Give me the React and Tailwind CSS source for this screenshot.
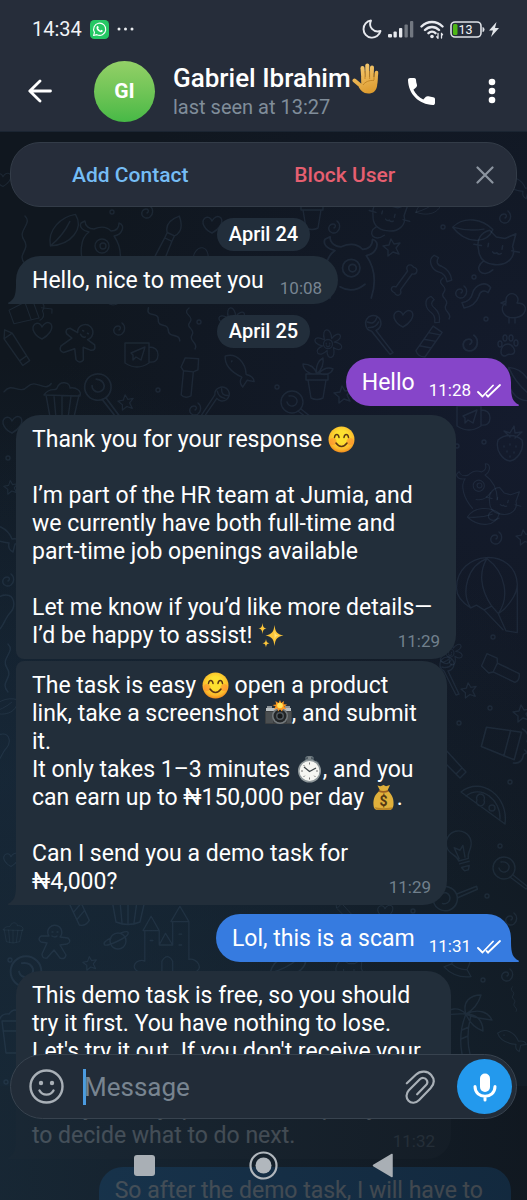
import React from "react";

const DOODLES = {
  spiral: "M0 1c2-1 2-4-1-4s-5 3-4 6 5 4 8 2 4-8 0-11",
  star: "M-1-8l3 5 6-1-4 5 3 6-6-2-5 4 0-6-5-4 6-1z",
  heart: "M0 8C-7 5-12-3-7-7c3-2 6 0 7 3 2-4 6-6 9-3 3 5-3 12-9 15z",
  flower:
    "M-5 0a5 5 0 1 0 10 0a5 5 0 1 0-10 0M-4-5c-4-14 8-14 8-1 8-11 16-1 3 4 13 1 9 13-1 6 4 13-8 15-7 3-9 10-17 0-5-5-13-2-10-13 1-7M-2-1v1M2-1v1M-2 2q2 2 4 0",
  bone: "M-4 10L4-8c-4-5 2-9 5-5 6 0 5 7 0 7L1 12c3 5-3 8-5 4-6-1-5-7 0-6z",
  pot: "M-11-4h22v6h-22zM-9 2l3 18q6 3 12 0L9 2M0-4c-2-8 2-14 6-16 1 6-1 11-6 16zM0-4c-9 1-14-5-14-10 7 0 12 4 14 10zM2-5c5-5 10-6 14-4-2 5-8 7-14 4z",
  ribbon: "M-8-14c-8 4-4 14 2 17 5 2 7 6 7 11l5-1c0-8-3-12-8-15-5-2-5-6-2-9z",
  squiggle: "M-4-22c-8 6 6 8 1 14s6 7 2 13 7 8 3 14",
  duck: "M-6-8a6 6 0 1 1 11 3c8 0 10 5 7 10-4 6-18 7-21-1-2-5 1-8 3-9zM-6-7l-5 2 5 2M-3 10v5M3 10v5",
  paw: "M-6 6c0-5 3-8 7-8s8 6 6 9-5 0-7 2-6 1-6-3zM-9-2a2 3 0 1 0 4 0a2 3 0 1 0-4 0M-4-8a2 3 0 1 0 4 0a2 3 0 1 0-4 0M2-8a2 3 0 1 0 4 0a2 3 0 1 0-4 0M7-3a2 3 0 1 0 4 0a2 3 0 1 0-4 0",
  candy: "M-7-12a7 7 0 1 1 8 7L12 18l-3 1L-3-5a7 7 0 0 1-4-7M-5-14q6 4 9-2M-5-9q6 2 10-3",
  stick: "M-6-14h11v30q-6 4-11 0zM-6-6l11-5M-6 2l11-5M-6 10l11-5",
  brush: "M0-22c8 8 9 14 4 20h-8c-5-6-4-12 4-20zM-4-2v6h8v-6M-4 4l-1 20q5 4 10 0L4 4",
  monster:
    "M-16 24c-6-16-5-32 4-38-6-1-10-5-8-9l4-2c0 5 4 8 9 8 7-3 13-2 17 2 5 0 8-3 8-8 7 2 3 12-5 13 7 10 8 22 4 34M-6 0a7 7 0 1 0 14 0a7 7 0 1 0-14 0M-1 0a3 3 0 1 0 6 0a3 3 0 1 0-6 0M-8 15q10 6 20-2",
  cat: "M-16 6c-4-9 0-16 7-19l7 5h8l9-6-1 12c5 8-1 18-13 19-9 1-15-3-17-11zM-8-1v3M5-1v3M-3 6q2 2 4 0 2 2 4 0M-21 2h7M14 2h7M-10 16c-8 8 2 16 10 6",
  strawberry:
    "M-12-6c6-6 18-6 24 0 3 11-6 20-12 21-7-1-15-10-12-21zM0-9l-6-6 6 2 4-7 1 7 7-1-7 6M-6 0v1M0-2v1M6 0v1M-3 5v1M4 6v1M0 10v1",
  balloon:
    "M-30 0C-30-40 32-44 34-4 34 8 22 22 14 27l-7-8-8 4-8-5-6 3c-8-5-15-12-15-21zM-15 21C-26 4-18-24 2-31M7 19C-6 0-6-18 2-31M14 27C26 10 22-16 2-31M14 27l8 18 12 2 0-50M-1 23l20 21",
  pizza: "M-20-12C0-28 28-8 24 20zM-15-8C0-20 20-4 19 15M-4-4a4 4 0 1 0 7 0a4 4 0 1 0-7 0M8 4a3 3 0 1 0 6 0a3 3 0 1 0-6 0M-20-12l44 32",
  bulb: "M-5 10c0-7-8-8-8-17a12 12 0 0 1 25 0c0 9-7 10-7 17zM-5 13h10M-4 17h8l-2 4h-4zM-4 8l-2-12 5 4 4-4-1 12",
  cake: "M-18-8c6-9 12-3 13-7 3-8 13-6 13 0 6-1 12 3 10 8zM-16-8l4 22q12 5 24 0l5-22M-8-7l2 22M0-7v23M9-7l-3 22",
  castle:
    "M-34 30c-12-4-3-16 6-12V-16h16v16h15v-26h18v42c10-2 17 12 6 14zM-30-16l9-16 9 16zM-12 0l7-13 8 13zM1-26l10-17 10 17zM-9 30V18q6-10 12 0v12M-22-5h3M10-12h3M10 0h3",
  ginger: "M-6-10a7 7 0 1 1 12 3l8 1q4 4-1 6l-7 1 6 10q-1 5-6 3l-6-8-7 8q-5 1-5-4l5-11-6-1q-4-3 0-6l8 0zM-2-12h1M3-12h1M-2-8q3 2 5 0",
  planet: "M-8 0a8 8 0 1 0 16 0a8 8 0 1 0-16 0M-7-3c-7 3-8 6-6 7 5 1 22-8 23-11 1-3-2-3-7-1",
  palm: "M-4 32C-7 16-5 4 0-8l5 1C1 8 1 20 4 32M0-8c-8-8-18-6-22 2 9-3 16-2 22-2zM0-8c-4-12 4-19 15-19-3 10-8 15-15 19zM0-8c12-6 22-2 26 6-9-1-18-2-26-6zM0-8c10 0 17 6 17 17C9 6 3 0 0-8zM-4 8l7-3M-5 17l7-3",
  fish: "M-18-6c10-8 22 0 26 10 5-1 9 1 10 4l-7 1-2 8c-4-2-5-5-4-9-10-1-20-4-23-14zM-10-4v1",
  shake: "M-13-14h26l-4 32h-18zM-16-14q2-8 10-7 6-8 12 0 9-1 10 7M-12-4h24M2-21l6-12 5 2",
  mug: "M-12-12h24v20q-12 8-24 0zM12-8q9 0 9 8t-9 7M-6-2l14-6-4 13-5-3-3 3v-5z",
  leaf: "M-20 6c4-16 22-22 36-18 2 16-16 26-36 18zM-20 6q16-4 28-14",
  pencil: "M-14-14l8 2 22 24-6 6-23-23zM-6-12l-6 6M12 8l-6 6",
  drop: "M-2-26c8 8-8 14-1 24s-8 14 1 24",
  pear: "M0-20c9 0 10 12 4 18s-8 20-17 19-13-14-4-22S-10-20 0-20z",
  ring: "M-2 0a2 2 0 1 0 4 0a2 2 0 1 0-4 0",
  lolly: "M-11-6a11 11 0 1 0 22 0a11 11 0 1 0-22 0M-5-6a5 5 0 1 0 10-2q-2-5-8-4M6 3l16 12 2-2L9 1",
  torch: "M-9-18l12-6 5 10-3 4 10 22q-4 6-9 4L-4-6l-4-2zM-4-6l9-4",
  hat: "M-16 8q16 8 32 0l-7-6c2-12-3-20-9-20S-11-10-9 2zM-9 2q9 4 18 0",
};

const PLACED = [
  ["leaf", 66, 232, 1, -25], ["ring", 112, 212], ["spiral", 147, 212], ["brush", 170, 236, 1, 25], ["heart", 212, 225],
  ["drop", 27, 242], ["monster", 101, 246, 1, 0], ["hat", 200, 262, 0.8, 10], ["pot", 312, 208], ["spiral", 334, 227],
  ["cat", 390, 214, 1, 15], ["leaf", 430, 208, 0.7], ["spiral", 505, 217], ["ring", 443, 227], ["star", 392, 247],
  ["monster", 350, 268, 1.25, 0], ["cat", 497, 246, 1.1, 10], ["leaf", 473, 232, 1, 30], ["bone", 402, 278, 1, 12],
  ["ribbon", 444, 268, 1, -8], ["squiggle", 447, 300], ["spiral", 461, 292], ["ribbon", 477, 299, 1.1, 80], ["duck", 512, 308],
  ["ribbon", 436, 310, 0.9, 10], ["heart", 403, 319], ["ring", 486, 319], ["ring", 474, 277], ["candy", 376, 336, 1.1, -12],
  ["stick", 430, 341, 1, 35], ["spiral", 470, 343, 1.3], ["paw", 507, 346], ["flower", 328, 344, 0.9], ["pot", 317, 378],
  ["lolly", 292, 408, 1], ["ring", 277, 387], ["star", 343, 394], ["mug", 469, 418], ["leaf", 518, 386, 1, 80],
  ["shake", 25, 312, 0.8, 70], ["pear", 105, 300, 0.8, 80], ["heart", 42, 331], ["spiral", 119, 329], ["ginger", 78, 343, 1.1, 30],
  ["pencil", 16, 346, 1, 10], ["squiggle", 166, 325, 1.1, -35], ["squiggle", 193, 330], ["ring", 199, 322], ["flower", 232, 322, 0.9],
  ["mug", 137, 355], ["fish", 240, 368, 1, 20], ["torch", 184, 378, 1, 30], ["star", 126, 402, 0.9], ["lolly", 96, 394, 1.2, 15],
  ["drop", 26, 390, 1, 80], ["cake", 62, 403, 1], ["candy", 212, 400, 1, 60], ["spiral", 195, 409], ["ring", 158, 390],
  ["heart", 12, 425], ["star", 11, 487, 0.8], ["fish", 4, 535], ["pear", 6, 615], ["ring", 8, 458], ["spiral", 8, 580],
  ["strawberry", 510, 446], ["ring", 484, 442], ["ring", 457, 446], ["monster", 478, 486, 0.8, -20], ["cat", 504, 500, 0.85, 15],
  ["leaf", 484, 518, 0.8, 20], ["spiral", 496, 538], ["star", 524, 537, 0.9], ["balloon", 485, 588, 0.95], ["ring", 493, 637],
  ["flower", 450, 653, 0.8], ["torch", 500, 674, 1, -40], ["star", 469, 690, 0.9], ["candy", 447, 676, 1], ["ring", 490, 708],
  ["ring", 459, 723], ["shake", 503, 742, 1.1, 105], ["star", 522, 713], ["pencil", 450, 760], ["pizza", 481, 804], ["ring", 510, 782],
  ["bulb", 461, 850, 1, -15], ["ring", 500, 846], ["lolly", 504, 874, 1], ["lolly", 451, 902, 1.1, -60], ["ring", 487, 896],
  ["spiral", 511, 919], ["leaf", 6, 708, 0.7], ["pear", 3, 750, 0.8], ["drop", 10, 670], ["heart", 11, 860, 0.8],
  ["cake", 13, 934, 0.55], ["stick", 78, 908, 1, -25], ["cake", 128, 908, 1], ["castle", 170, 945, 0.9], ["ginger", 54, 944, 1],
  ["planet", 118, 941], ["star", 90, 963, 0.8], ["ring", 10, 960], ["lolly", 26, 980, 1.4, 0], ["shake", 15, 1035, 1], ["hat", 460, 965, 0.9, 20],
  ["ring", 483, 980], ["spiral", 507, 975], ["palm", 466, 1022, 1], ["fish", 512, 1038, 0.8], ["squiggle", 515, 1000, 0.6],
  ["pencil", 346, 912, 0.7], ["heart", 385, 912, 0.8], ["ring", 413, 911], ["leaf", 290, 967, 1], ["cat", 350, 970, 0.8],
  ["ring", 6, 1082], ["heart", 3, 180, 0.8], ["fish", 519, 185, 0.8],
];

function Wallpaper() {
  return (
    <svg aria-hidden="true" className="pointer-events-none absolute inset-x-0 top-0 h-[1200px] w-full" viewBox="0 0 527 1200" preserveAspectRatio="xMidYMin slice" fill="none" stroke="#5b7892" strokeOpacity="0.17" strokeWidth="1.4" strokeLinecap="round" strokeLinejoin="round">
      {PLACED.map(([name, x, y, s = 1, r = 0], i) => (
        <path key={i} d={DOODLES[name]} transform={`translate(${x} ${y}) rotate(${r}) scale(${s})`} />
      ))}
    </svg>
  );
}

const emojiBox = "inline-block size-[27px] align-[-6px]";

function Smile() {
  return (
    <svg role="img" aria-label="smiling face" viewBox="0 0 27 27" className={emojiBox}>
      <defs>
        <radialGradient id="face" cx="0.5" cy="0.4" r="0.6">
          <stop offset="0.4" stopColor="#fde030" />
          <stop offset="0.8" stopColor="#fbb82c" />
          <stop offset="1" stopColor="#f08a1c" />
        </radialGradient>
      </defs>
      <circle cx="13.5" cy="13.5" r="13" fill="url(#face)" />
      <circle cx="5" cy="15.500" r="3.500" fill="#ff7a30" opacity="0.45" />
      <circle cx="22" cy="15.500" r="3.500" fill="#ff7a30" opacity="0.45" />
      <path d="M6.500 11.500c.5-4 4-4 4.500 0M16 11.500c.5-4 4-4 4.500 0M8 17c3 4.500 8 4.500 11 0" fill="none" stroke="#5b3615" strokeWidth="1.500" strokeLinecap="round" />
    </svg>
  );
}

function Sparkles() {
  return (
    <svg role="img" aria-label="sparkles" viewBox="0 0 27 27" className={emojiBox}>
      <path d="M16.500 3c1 7 2 9 9 10.500-7 1.500-8 3.500-9 10.500-1-7-2-9-9-10.500 7-1.500 8-3.500 9-10.500z" fill="#fdc63a" />
      <path d="M16.500 8c.5 4 1 5 4.500 5.500-3.500.5-4 1.500-4.500 5.500z" fill="#ffe27a" />
      <path d="M4.500 1c.5 4 1 5 4 5.500-3 .5-3.500 1.500-4 5.500-.5-4-1-5-4-5.500 3-.5 3.500-1.500 4-5.500zM8 17c.4 3 1 3.800 3.500 4.200C9 21.700 8.400 22.500 8 25.500c-.4-3-1-3.800-3.500-4.300C7 20.800 7.600 20 8 17z" fill="#fdc63a" />
    </svg>
  );
}

function Camera() {
  return (
    <svg role="img" aria-label="camera with flash" viewBox="0 0 27 27" className={emojiBox}>
      <path d="M1 8h25v5H1z" fill="#b9bec0" />
      <path d="M2 6h5v2H2zM20 6h5v2h-5z" fill="#8d9396" />
      <path d="M0 11h27v12q0 1-1 1H1q-1 0-1-1z" fill="#3c3f41" />
      <path d="M1 12h7v11H1zM22 12h4v11h-4z" fill="#4b4f51" />
      <circle cx="15" cy="16" r="8" fill="#747a7d" />
      <circle cx="15" cy="16" r="6.500" fill="#232628" />
      <circle cx="15" cy="16" r="4" fill="#50585d" />
      <circle cx="15" cy="16" r="2.500" fill="#16191b" />
      <path d="M15 0l1.200 3L19 1l-.5 3.200 3.500.3-2.700 2.200 2.200 2.500-3.400-.4L17 11.500l-2-2.300-2 2.300-.6-3.200-3.700 1.200 2-2.900L7.500 5l3.600-.6L10.500 1l3 2z" fill="#ff9820" />
      <circle cx="15" cy="5.500" r="2.800" fill="#ffe45c" />
    </svg>
  );
}

function Stopwatch() {
  return (
    <svg role="img" aria-label="stopwatch" viewBox="0 0 27 27" className={emojiBox}>
      <path d="M11.500 0h4v5h-4z" fill="#7e878b" />
      <path d="M10 1.500q3.500-3 7 0v2h-7z" fill="none" stroke="#68757b" strokeWidth="1.200" />
      <path d="M20 4.500l3 2.500-1.500 2-3-2.500z" fill="#59656b" />
      <circle cx="13.500" cy="15" r="11.500" fill="#8f989b" />
      <circle cx="13.500" cy="15" r="10" fill="#f6f6f2" />
      <path d="M13.500 6.500v2M13.500 21.500v2M5 15h2M20 15h2M7.500 9l1.300 1.300M18.200 19.700l1.300 1.300M7.500 21l1.300-1.300" stroke="#777" strokeWidth="1" />
      <path d="M8 11l5.500 4.500L20 12" fill="none" stroke="#40474a" strokeWidth="1.300" />
    </svg>
  );
}

function MoneyBag() {
  return (
    <svg role="img" aria-label="money bag" viewBox="0 0 27 27" className={emojiBox}>
      <path d="M7.500 1.500l3 .8 3-1.300 2.500 1.200L20 1l-2.500 5.500c5 4 6.500 9 6 14.500-.3 3-2 5-4.500 5H8c-3 0-4.500-2-4.500-5C3 15 5 10 10 6.500z" fill="#e0b03b" />
      <path d="M5 23c3 1.500 14 1.500 18 0-.5 2-2 3-4 3H8c-1.500 0-2.500-1-3-3z" fill="#b88425" />
      <path d="M9 6q4.500 2 9 0l.5 1.800q-5 2-10 0z" fill="#9c5f20" />
      <text x="13.500" y="22" textAnchor="middle" fontSize="14" fontWeight="700" fill="#513714">$</text>
    </svg>
  );
}

function Hand() {
  return (
    <svg role="img" aria-label="raised hand" viewBox="0 0 27 31" className="ml-px h-[31px] w-[27px]">
      <defs>
        <linearGradient id="palm" gradientUnits="userSpaceOnUse" x1="8" y1="0" x2="18" y2="31">
          <stop offset="0" stopColor="#f6cb73" />
          <stop offset="1" stopColor="#dc9a2c" />
        </linearGradient>
      </defs>
      <g stroke="url(#palm)" strokeLinecap="round" fill="none" strokeWidth="4">
        <path d="M10.500 5L11.500 18" />
        <path d="M15.300 2.500V18" />
        <path d="M20 4.500L19.500 18" />
        <path d="M24.500 9.500L23.500 20" strokeWidth="3.600" />
        <path d="M2.500 17.500L9 23" />
      </g>
      <path d="M9.500 14h16l-.3 8c-.6 6-4 8.500-9 8.500-5 0-7.500-3-9.500-6.500l2.500-3z" fill="url(#palm)" />
      <path d="M11 22c2-3 6-5 11-4.500M13 8v8M17.600 8v8M22 10v7" fill="none" stroke="#bb7d20" strokeWidth="0.800" />
    </svg>
  );
}

function Checks() {
  return (
    <svg aria-label="read" role="img" viewBox="0 0 24 14" className="mb-1 h-[14px] w-6" fill="none" stroke="#fff" strokeWidth="1.800" strokeLinecap="round" strokeLinejoin="round">
      <path d="M1 8l4.500 4.500L16 1.500M11 12.500L23 1" />
      <path d="M9.500 11l1.500 1.500" />
    </svg>
  );
}

function Tail({ side, className }) {
  return side === "left" ? (
    <svg aria-hidden="true" viewBox="0 0 9 20" className={`absolute bottom-0 -left-2 h-5 w-[9px] ${className}`} fill="currentColor">
      <path d="M9 0v20H.8c-.8 0-1-1-.3-1.400C6 15.500 8 12 8 0z" />
    </svg>
  ) : (
    <svg aria-hidden="true" viewBox="0 0 9 20" className={`absolute bottom-0 -right-2 h-5 w-[9px] ${className}`} fill="currentColor">
      <path d="M0 0v20h8.200c.8 0 1-1 .3-1.400C3 15.500 1 12 1 0z" />
    </svg>
  );
}

function Incoming({ children, time, shape, tail, width, short }) {
  return (
    <article className={`relative ml-4 bg-[#222e3a] px-4 pt-[11px] pb-[9px] ${shape} ${width}`}>
      {tail && <Tail side="left" className="text-[#222e3a]" />}
      {short ? (
        <div className="flex items-end gap-4">
          <p>{children}</p>
          <time className="-mb-[5px] text-[17px] leading-6 text-[#788592]">{time}</time>
        </div>
      ) : (
        <div className="grid">
          <p className="col-start-1 row-start-1 whitespace-pre-line">{children}</p>
          <time className="col-start-1 row-start-1 -mb-[3px] self-end justify-self-end text-[17px] leading-6 text-[#71808d]">{time}</time>
        </div>
      )}
    </article>
  );
}

function Outgoing({ children, time, color, tailColor }) {
  return (
    <article className={`relative mr-4 flex items-end gap-[14px] self-end rounded-t-3xl rounded-bl-3xl pt-[11px] pr-[10px] pb-[9px] pl-4 ${color}`}>
      <Tail side="right" className={tailColor} />
      <p>{children}</p>
      <div className="-mb-[5px] flex items-end gap-[6px] text-[17px] leading-6">
        <time>{time}</time>
        <Checks />
      </div>
    </article>
  );
}

function DayPill({ children }) {
  return <h2 className="self-center rounded-full bg-[#222e3b] px-3 text-[20px] font-medium leading-[33px]">{children}</h2>;
}

function StatusBar() {
  return (
    <div className="flex h-[58px] items-center pl-8 pr-7 text-[20px] leading-6 text-[#f1f3f6]">
      <span>14:34</span>
      <svg aria-label="WhatsApp" role="img" viewBox="0 0 20 20" className="ml-2 size-[19px]">
        <rect width="20" height="20" rx="4.500" fill="#25c764" />
        <path d="M3.800 16.300l.9-3.300a6.400 6.400 0 1 1 2.500 2.400z" fill="none" stroke="#fff" strokeWidth="1.200" strokeLinejoin="round" />
        <path d="M7.700 6.400c.5-.4.9-.1 1 .3l.5 1.200-.7.9c.5 1.100 1.400 1.900 2.500 2.400l.8-.9 1.600.8c.2 1.200-1 2-2.100 1.800-2.600-.5-4.500-2.700-4.500-4.700 0-.7.4-1.400.9-1.800z" fill="#fff" />
      </svg>
      <svg aria-hidden="true" viewBox="0 0 18 4" className="ml-2 h-1 w-[18px]" fill="#e8ebee">
        <circle cx="2" cy="2" r="1.500" /><circle cx="8.500" cy="2" r="1.500" /><circle cx="15" cy="2" r="1.500" />
      </svg>
      <div className="ml-auto flex items-center gap-[6px]">
        <svg aria-label="Do not disturb" role="img" viewBox="0 0 20 20" className="size-5" fill="none" stroke="#e7e9ee" strokeWidth="1.900" strokeLinejoin="round">
          <path d="M9 1.500A8.600 8.600 0 1 0 18.500 12C11.500 14 6 8 9 1.500z" />
        </svg>
        <svg aria-label="Signal" role="img" viewBox="0 0 26 17" className="h-[17px] w-[26px]" fill="#e7e9ee">
          <rect x="0" y="13" width="4" height="3.500" rx="1" /><rect x="5.500" y="10.500" width="3.300" height="6" rx="1" /><rect x="11" y="7" width="3.300" height="9.500" rx="1" />
          <rect x="16.500" y="3.500" width="3.300" height="13" rx="1" opacity="0.4" /><rect x="22" y="0" width="3.300" height="16.500" rx="1" opacity="0.4" />
        </svg>
        <svg aria-label="Wi-Fi" role="img" viewBox="0 0 24 19" className="h-[19px] w-6" fill="none" stroke="#e7e9ee" strokeWidth="2.400" strokeLinecap="round">
          <path d="M1.500 6.500C7.500.5 16.500.5 22.500 6.500M5 10c4-4 10-4 14 0M8.500 13.200c2-2 5-2 7 0" />
          <circle cx="12" cy="16.500" r="1.800" fill="#e7e9ee" stroke="none" />
          <path d="M18 13.500v4.500m-1.200-1.200L18 18.300M21.500 18v-4.500m0 0l1 1.200" strokeWidth="1.300" />
        </svg>
        <div className="flex items-center gap-1">
          <svg aria-label="Battery 13 percent" role="img" viewBox="0 0 35 17" className="h-[17px] w-[35px]">
            <rect x="1" y="1" width="30" height="15" rx="4" fill="none" stroke="#dfe2e7" strokeWidth="1.600" />
            <path d="M32.500 6q2 0 2 2.500t-2 2.500z" fill="#dfe2e7" />
            <rect x="3" y="3" width="4.500" height="11" rx="1.500" fill="#4eb716" />
            <text x="15.500" y="13" textAnchor="middle" fontSize="12.500" fill="#f3f4f6">13</text>
          </svg>
          <svg aria-label="Charging" role="img" viewBox="0 0 10 15" className="h-[15px] w-[10px]" fill="#e2e5e9"><path d="M7.500 0L0 8.500h4L2 15l8-9H6z" /></svg>
        </div>
      </div>
    </div>
  );
}

export default function App() {
  return (
    <main className="relative isolate flex h-screen min-h-[600px] flex-col overflow-hidden bg-[radial-gradient(circle_at_0%_100%,#182a39_0%,transparent_60%),radial-gradient(circle_at_0%_65%,#152434_0%,transparent_45%),radial-gradient(circle_at_100%_35%,#141b2d_0%,transparent_50%)] bg-[#10171f] font-['Roboto',sans-serif] text-[23px] leading-7 text-white">
      <Wallpaper />

      <header className="relative border-b border-[#1b2532] bg-[#262d3a]">
        <StatusBar />
        <div className="mb-[7px] flex h-[66px] items-center pl-7 pr-[31px]">
          <button type="button" aria-label="Back" className="mr-[42px]">
            <svg viewBox="0 0 24 24" className="size-6" fill="none" stroke="#fff" strokeWidth="2.800" strokeLinecap="round" strokeLinejoin="round"><path d="M22.500 12H2M12 2L1.800 12 12 22" /></svg>
          </button>
          <div className="flex size-[61px] shrink-0 items-center justify-center rounded-full bg-linear-to-b from-[#93d067] to-[#46b946] text-[21px] font-bold">GI</div>
          <div className="ml-[18px] min-w-0 flex-1">
            <h1 className="flex items-center whitespace-nowrap text-[26px] font-medium leading-8">Gabriel Ibrahim<Hand /></h1>
            <p className="text-[20px] leading-[26px] text-[#808d9a]">last seen at 13:27</p>
          </div>
          <button type="button" aria-label="Call" className="mr-[53px]">
            <svg viewBox="3 3 18 18" className="size-[27px]" fill="#fff"><path d="M6.620 10.790c1.440 2.830 3.760 5.140 6.590 6.590l1.700-1.800c.5-.5 1.100-.6 1.700-.4 1.100.37 2.050.5 3.200.6.7.1 1.190.55 1.190 1.220V19.600c0 .8-.55 1.400-1.400 1.400C10.300 20.800 3.200 13.700 3 4.400 3 3.550 3.600 3 4.400 3h2.700c.7 0 1.150.5 1.220 1.200.1 1.150.23 2.100.6 3.200.2.6.1 1.200-.4 1.700z" /></svg>
          </button>
          <button type="button" aria-label="More options">
            <svg viewBox="0 0 8 26" className="h-[26px] w-2" fill="#fff"><circle cx="4" cy="4" r="3.300" /><circle cx="4" cy="13" r="3.300" /><circle cx="4" cy="22" r="3.300" /></svg>
          </button>
        </div>
      </header>

      <div className="relative mx-[10px] mt-[10px] flex h-[65px] shrink-0 items-center rounded-[30px] border border-[#333c48] bg-[#262d3a] pl-3 pr-[22px] text-[21px] font-medium">
        <button type="button" className="flex-1 text-[#75bdf5]">Add Contact</button>
        <button type="button" className="flex-1 text-[#e65f70]">Block User</button>
        <button type="button" aria-label="Dismiss" className="ml-6">
          <svg viewBox="0 0 18 18" className="size-[18px]" fill="none" stroke="#8b949f" strokeWidth="2.200" strokeLinecap="round"><path d="M1.500 1.500l15 15M16.500 1.500l-15 15" /></svg>
        </button>
      </div>

      <section aria-label="Messages" className="relative mt-[11px] flex flex-col items-start">
        <DayPill>April 24</DayPill>
        <div className="mt-[5px]">
          <Incoming short tail shape="rounded-t-3xl rounded-br-3xl" time="10:08" width="w-fit">Hello, nice to meet you</Incoming>
        </div>
        <div className="mt-[11px] self-center"><DayPill>April 25</DayPill></div>
        <div className="mt-[10px] flex flex-col self-stretch">
          <Outgoing time="11:28" color="bg-[#8645c9]" tailColor="text-[#8645c9]">Hello</Outgoing>
        </div>
        <div className="mt-[9px] w-full max-w-[456px]">
          <Incoming shape="rounded-t-3xl rounded-br-3xl rounded-bl-lg" time="11:29" width="">
            Thank you for your response <Smile />{"\n\n"}I’m part of the HR team at Jumia, and{"\n"}we currently have both full-time and{"\n"}part-time job openings available{"\n\n"}Let me know if you’d like more details—{"\n"}I’d be happy to assist! <Sparkles />
          </Incoming>
        </div>
        <div className="mt-[2px] w-full max-w-[447px]">
          <Incoming tail shape="rounded-tl-lg rounded-r-3xl" time="11:29" width="">
            The task is easy <Smile /> open a product{"\n"}link, take a screenshot <Camera />, and submit{"\n"}it.{"\n"}It only takes 1–3 minutes <Stopwatch />, and you{"\n"}can earn up to ₦150,000 per day <MoneyBag />.{"\n\n"}Can I send you a demo task for{"\n"}₦4,000?
          </Incoming>
        </div>
        <div className="mt-[9px] flex flex-col self-stretch">
          <Outgoing time="11:31" color="bg-[#367be0]" tailColor="text-[#367be0]">Lol, this is a scam</Outgoing>
        </div>
        <div className="mt-[9px] w-full max-w-[451px]">
          <Incoming tail shape="rounded-t-3xl rounded-br-3xl" time="11:32" width="">
            This demo task is free, so you should{"\n"}try it first. You have nothing to lose.{"\n"}Let's try it out. If you don't receive your{"\n"}reward after the first task,{"\n"}then you may quit, and it is up to you{"\n"}to decide what to do next.
          </Incoming>
        </div>
        <div className="mt-2 flex flex-col self-stretch">
          <article className="relative mr-4 self-end whitespace-nowrap rounded-t-3xl bg-[#1c6fb8] py-[10px] pr-7 pl-4">So after the demo task, I will have to</article>
        </div>
      </section>

      <footer className="absolute inset-x-0 bottom-0">
        <div aria-hidden="true" className="absolute inset-x-0 bottom-0 h-[114px] bg-linear-to-r from-[#172633] to-[#10171f] opacity-80" />
        <form className="relative mx-[10px] flex h-[65px] items-center rounded-full border border-[#38434f] bg-[#222c38] pl-[18px] pr-1" onSubmit={(e) => e.preventDefault()}>
          <button type="button" aria-label="Emoji" className="shrink-0">
            <svg viewBox="0 0 35 35" className="size-[35px]" fill="none" stroke="#a9b0b7" strokeWidth="2.400" strokeLinecap="round">
              <circle cx="17.500" cy="17.500" r="16" /><path d="M10.500 21.500c3 5.500 11 5.500 14 0" />
              <circle cx="12" cy="14" r="2.200" fill="#a9b0b7" stroke="none" /><circle cx="23" cy="14" r="2.200" fill="#a9b0b7" stroke="none" />
            </svg>
          </button>
          <span aria-hidden="true" className="ml-[19px] h-9 w-[3px] shrink-0 bg-[#4b9be0]" />
          <input aria-label="Message" placeholder="Message" className="-ml-[2px] min-w-0 flex-1 bg-transparent text-[26px] leading-8 outline-none placeholder:text-[#788490]" />
          <button type="button" aria-label="Attach file" className="mr-[21px] shrink-0">
            <svg viewBox="425 502 95 108" className="h-9 w-8" fill="none" stroke="#a9b0b7" strokeWidth="6.500" strokeLinecap="round" strokeLinejoin="round">
              <path d="M433 545L460 519C475 505 496 508 506 520C517 533 515 548 504 560L470 595C460 605 446 606 438 597C430 589 430 576 439 566L472 533C478 527 487 528 491 533C496 539 495 546 490 551L464 578" />
            </svg>
          </button>
          <button type="button" aria-label="Record voice message" className="flex size-[55px] shrink-0 items-center justify-center rounded-full bg-[#2399ed]">
            <svg viewBox="0 0 24 30" className="h-[30px] w-6" fill="none" stroke="#fff" strokeWidth="3" strokeLinecap="round">
              <rect x="7" y="1.500" width="10" height="18.500" rx="5" fill="#fff" stroke="none" /><path d="M2 14.500c0 13 20 13 20 0M12 24.500V28" />
            </svg>
          </button>
        </form>
        <nav aria-label="System" className="relative flex h-[81px] items-center justify-center gap-[90px] pt-3">
          <button type="button" aria-label="Recent apps" className="p-1"><svg viewBox="0 0 21 21" className="size-[21px]"><rect width="21" height="21" rx="3" fill="#a9afb5" /></svg></button>
          <button type="button" aria-label="Home"><svg viewBox="0 0 29 29" className="size-[29px]"><circle cx="14.500" cy="14.500" r="13" fill="none" stroke="#b1b7bd" strokeWidth="2.200" /><circle cx="14.500" cy="14.500" r="8" fill="#b1b7bd" /></svg></button>
          <button type="button" aria-label="Back" className="p-1"><svg viewBox="0 0 21 25" className="h-[25px] w-[21px]"><path d="M20 1.500v22L1.500 12.500z" fill="#a9afb5" stroke="#a9afb5" strokeWidth="1.500" strokeLinejoin="round" /></svg></button>
        </nav>
      </footer>
    </main>
  );
}
